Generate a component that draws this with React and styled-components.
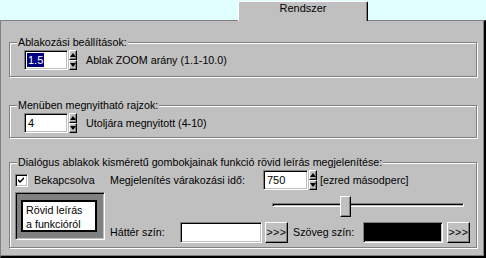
import React from 'react'
import styled, { createGlobalStyle, css } from 'styled-components'

const GlobalStyle = createGlobalStyle`
  html, body {
    margin: 0;
    padding: 0;
    background: #e1ffff;
  }
`

const Window = styled.div`
  width: 486px;
  height: 258px;
  display: flex;
  flex-direction: column;
  background: #e1ffff;
  color: #000;
  font-family: "Liberation Sans", Arial, sans-serif;
  font-size: 10.7px;
  line-height: 13px;
`

const TabStrip = styled.div`
  height: 20px;
  flex: none;
  display: flex;
  align-items: flex-end;
  padding-left: 238px;
`

const Tab = styled.div`
  position: relative;
  z-index: 1;
  box-sizing: border-box;
  width: 130px;
  height: 20px;
  margin-bottom: -1px;
  background: #c0c0c0;
  border-top: 1px solid #fff;
  border-left: 1px solid #fff;
  border-right: 1px solid #000;
  border-radius: 2px 2px 0 0;
  box-shadow: inset -1px 0 0 #808080;
  text-align: center;
  font-size: 11px;
`

const Panel = styled.div`
  flex: 1;
  box-sizing: border-box;
  display: flex;
  flex-direction: column;
  background: #c0c0c0;
  border-top: 1px solid #808080;
  border-left: 1px solid #808080;
  border-right: 2px solid #000;
  border-bottom: 2px solid #000;
  box-shadow: inset -1px -1px 0 #808080;
  padding: 15px 7px 0 8px;
`

const Group = styled.fieldset`
  margin: ${p => p.$top || 0}px 0 0;
  padding: 0;
  min-width: 0;
  border: 1px solid #808080;
  box-shadow: inset 1px 1px 0 #fff, 1px 1px 0 #fff;
`

const Legend = styled.legend`
  margin-left: 7px;
  padding: 0 1px;
  background: #c0c0c0;
  line-height: 13px;
`

const GroupBody = styled.div`
  display: flex;
  align-items: center;
  padding: 1px 0 ${p => p.$pb}px ${p => p.$pl}px;
`

const Label = styled.span`
  white-space: nowrap;
  ${p => p.$width && css`width: ${p.$width}px;`}
  margin-left: ${p => p.$gap || 0}px;
`

const sunken = css`
  box-sizing: border-box;
  border-style: solid;
  border-width: 1px;
  border-color: #808080 #fff #fff #808080;
  box-shadow: inset 1px 1px 0 #000, inset -1px -1px 0 #c0c0c0;
`

const raised = css`
  box-sizing: border-box;
  background: #c0c0c0;
  border-style: solid;
  border-width: 1px;
  border-color: #fff #000 #000 #fff;
  box-shadow: inset -1px -1px 0 #808080;
`

const EditBox = styled.div`
  ${sunken};
  width: ${p => p.$width}px;
  height: ${p => p.$height || 20}px;
  background: ${p => p.$fill || '#fff'};
  padding: 1px 0 0 2px;
  line-height: 16px;
`

const EditText = styled.span`
  display: inline-block;
  padding: 0 1px;
  line-height: 14px;
  font-size: 11px;
  ${p => p.$selected && css`
    background: #000080;
    color: #fff;
  `}
`

const Spin = styled.div`
  width: 8px;
  height: 20px;
  margin-left: 1px;
  display: flex;
  flex-direction: column;
`

const SpinButton = styled.div`
  ${raised};
  flex: 1;
  display: flex;
  align-items: center;
  justify-content: center;

  &::after {
    content: '';
    border-left: 3px solid transparent;
    border-right: 3px solid transparent;
    ${p => p.$down
      ? css`border-top: 4px solid #000;`
      : css`border-bottom: 4px solid #000;`}
  }
`

const Columns = styled.div`
  display: flex;
  padding: 1px 0 4px 5px;
`

const LeftCol = styled.div`
  width: 90px;
  display: flex;
  flex-direction: column;
`

const RightCol = styled.div`
  margin-left: 5px;
  display: flex;
  flex-direction: column;
`

const Row = styled.div`
  height: ${p => p.$height}px;
  display: flex;
  align-items: center;
`

const CheckBox = styled.div`
  ${sunken};
  width: 13px;
  height: 13px;
  background: #fff;
  display: flex;
  align-items: center;
  justify-content: center;
`

const Preview = styled.div`
  ${sunken};
  margin-top: 2px;
  height: 48px;
  background: #808080;
  padding: 7px 7px 7px 5px;
`

const PreviewNote = styled.div`
  box-sizing: border-box;
  width: 76px;
  height: 32px;
  background: #fff;
  border: 2px solid #000;
  padding: 1px 0 0 3px;
  line-height: 14px;
`

const Slider = styled.div`
  position: relative;
  width: 192px;
  height: 32px;
  margin-left: 162px;
`

const Track = styled.div`
  ${sunken};
  margin-top: 13px;
  height: 4px;
  background: #c0c0c0;
  box-shadow: inset 1px 1px 0 #000;
`

const Thumb = styled.div`
  ${raised};
  position: absolute;
  top: 6px;
  width: 11px;
  height: 21px;
`

const DotsButton = styled.div`
  ${raised};
  width: 23px;
  height: 21px;
  margin-left: ${p => p.$gap}px;
  text-align: center;
  line-height: 19px;
  letter-spacing: 0.5px;
`

const SpinEdit = ({ value, selected, width = 44 }) => (
  <>
    <EditBox $width={width}>
      <EditText $selected={selected}>{value}</EditText>
    </EditBox>
    <Spin>
      <SpinButton />
      <SpinButton $down />
    </Spin>
  </>
)

const delay = { value: 750, min: 0, max: 2000 }

export default function App() {
  const thumbLeft = Math.round(((delay.value - delay.min) / (delay.max - delay.min)) * (192 - 11))

  return (
    <Window>
      <GlobalStyle />
      <TabStrip>
        <Tab>Rendszer</Tab>
      </TabStrip>
      <Panel>
        <Group>
          <Legend>Ablakozási beállítások:</Legend>
          <GroupBody $pl={14} $pb={6}>
            <SpinEdit value="1.5" selected />
            <Label $gap={9}>Ablak ZOOM arány (1.1-10.0)</Label>
          </GroupBody>
        </Group>

        <Group $top={22}>
          <Legend>Menüben megnyitható rajzok:</Legend>
          <GroupBody $pl={14} $pb={4}>
            <SpinEdit value="4" />
            <Label $gap={9}>Utoljára megnyitott (4-10)</Label>
          </GroupBody>
        </Group>

        <Group $top={18}>
          <Legend>Dialógus ablakok kisméretű gombokjainak funkció rövid leírás megjelenítése:</Legend>
          <Columns>
            <LeftCol>
              <Row $height={20}>
                <CheckBox>
                  <svg width="7" height="7" viewBox="0 0 7 7">
                    <path d="M0 2 L2 4 L6 0 L6 2 L2 6 L0 4 Z" fill="#000" />
                  </svg>
                </CheckBox>
                <Label $gap={6}>Bekapcsolva</Label>
              </Row>
              <Preview>
                <PreviewNote>
                  Rövid leírás
                  <br />
                  a funkcióról
                </PreviewNote>
              </Preview>
            </LeftCol>

            <RightCol>
              <Row $height={20}>
                <Label $width={153}>Megjelenítés várakozási idő:</Label>
                <SpinEdit value={String(delay.value)} width={45} />
                <Label $gap={3}>[ezred másodperc]</Label>
              </Row>
              <Slider>
                <Track />
                <Thumb style={{ left: thumbLeft }} />
              </Slider>
              <Row $height={21}>
                <Label $width={70}>Háttér szín:</Label>
                <EditBox $width={82} $height={21} />
                <DotsButton $gap={3}>&gt;&gt;&gt;</DotsButton>
                <Label $width={70} $gap={5}>Szöveg szín:</Label>
                <EditBox $width={80} $height={21} $fill="#000" />
                <DotsButton $gap={4}>&gt;&gt;&gt;</DotsButton>
              </Row>
            </RightCol>
          </Columns>
        </Group>
      </Panel>
    </Window>
  )
}
